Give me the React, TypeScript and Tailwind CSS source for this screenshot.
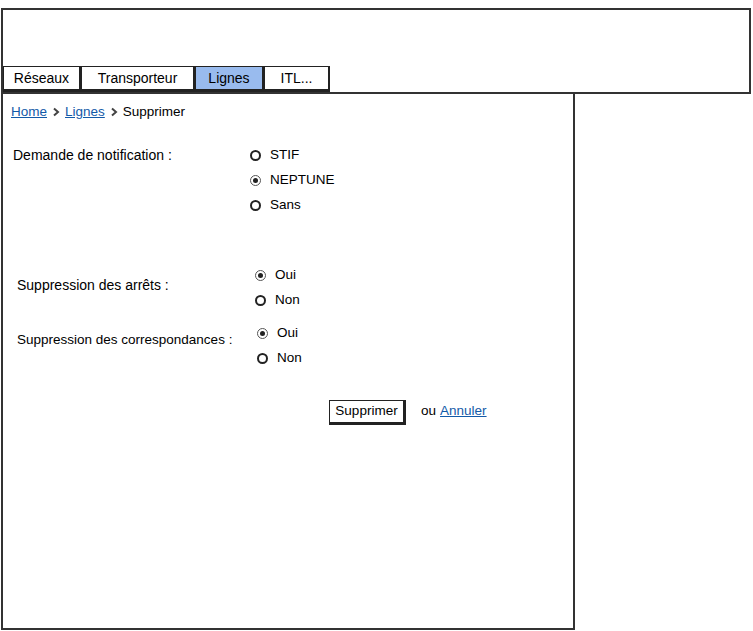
import React from "react";

const font = { fontFamily: '"Liberation Sans", Arial, sans-serif' };

function Radio({ label, checked }: { label: string; checked?: boolean }) {
  return (
    <div className="flex items-center h-[25px]">
      {checked ? (
        <span className="w-[11px] h-[11px] rounded-full border-[1.5px] border-[#555] flex items-center justify-center">
          <span className="w-[5px] h-[5px] rounded-full bg-[#222]" />
        </span>
      ) : (
        <span className="w-[11px] h-[11px] rounded-full border-2 border-[#222]" />
      )}
      <span className="ml-[9px] text-[13.5px] text-[#000]">{label}</span>
    </div>
  );
}

function Tab({ label, w, active }: { label: string; w: string; active?: boolean }) {
  return (
    <div
      className={`${w} h-[26px] flex items-center justify-center border border-[#222] border-b-[3px] border-r-2 text-[14px] text-[#000] ${
        active ? "bg-[#99bbee]" : "bg-white"
      }`}
    >
      {label}
    </div>
  );
}

function Chevron() {
  return (
    <svg width="8" height="10" viewBox="0 0 8 10" className="mx-[5px]">
      <path d="M2 1.5 L6 5 L2 8.5" fill="none" stroke="#444" strokeWidth="2" />
    </svg>
  );
}

export default function App() {
  return (
    <div className="w-[753px] h-[631px] bg-white text-[#000]" style={font}>
      <div className="pt-[8px] pl-[1px]">
        {/* Header */}
        <div className="w-[750px] h-[86px] border-2 border-[#333] flex items-end">
          <Tab label="Réseaux" w="w-[78px]" />
          <Tab label="Transporteur" w="w-[114px]" />
          <Tab label="Lignes" w="w-[69px]" active />
          <Tab label="ITL..." w="w-[66px]" />
        </div>
        {/* Main */}
        <div className="w-[574px] h-[537px] border-l-2 border-r-2 border-b-2 border-[#333] mt-[-1px]">
          <div className="flex items-center pt-[10px] pl-[8px] text-[13.5px] h-[28px]">
            <a className="text-[#135aa8] underline">Home</a>
            <Chevron />
            <a className="text-[#135aa8] underline">Lignes</a>
            <Chevron />
            <span>Supprimer</span>
          </div>

          <div className="flex mt-[22px] pl-[10px]">
            <div className="w-[237px] text-[14px] h-[25px] flex items-center">Demande de notification :</div>
            <div className="flex flex-col">
              <Radio label="STIF" />
              <Radio label="NEPTUNE" checked />
              <Radio label="Sans" />
            </div>
          </div>

          <div className="flex items-center mt-[45px] pl-[14px]">
            <div className="w-[238px] text-[14px] pb-[5px]">Suppression des arrêts :</div>
            <div className="flex flex-col">
              <Radio label="Oui" checked />
              <Radio label="Non" />
            </div>
          </div>

          <div className="flex mt-[8px] pl-[14px]">
            <div className="w-[240px] text-[13.5px] h-[25px] flex items-center mt-[7px]">
              Suppression des correspondances :
            </div>
            <div className="flex flex-col">
              <Radio label="Oui" checked />
              <Radio label="Non" />
            </div>
          </div>

          <div className="flex items-center mt-[29px] pl-[326px]">
            <button className="w-[77px] h-[25px] border border-[#222] border-r-[3px] border-b-[3px] bg-white text-[13.5px] text-[#000] flex items-center justify-center">
              Supprimer
            </button>
            <span className="ml-[15px] text-[13.5px] mt-[-3px]">ou</span>
            <a className="ml-[4px] text-[13.5px] text-[#135aa8] underline mt-[-3px]">Annuler</a>
          </div>
        </div>
      </div>
    </div>
  );
}
